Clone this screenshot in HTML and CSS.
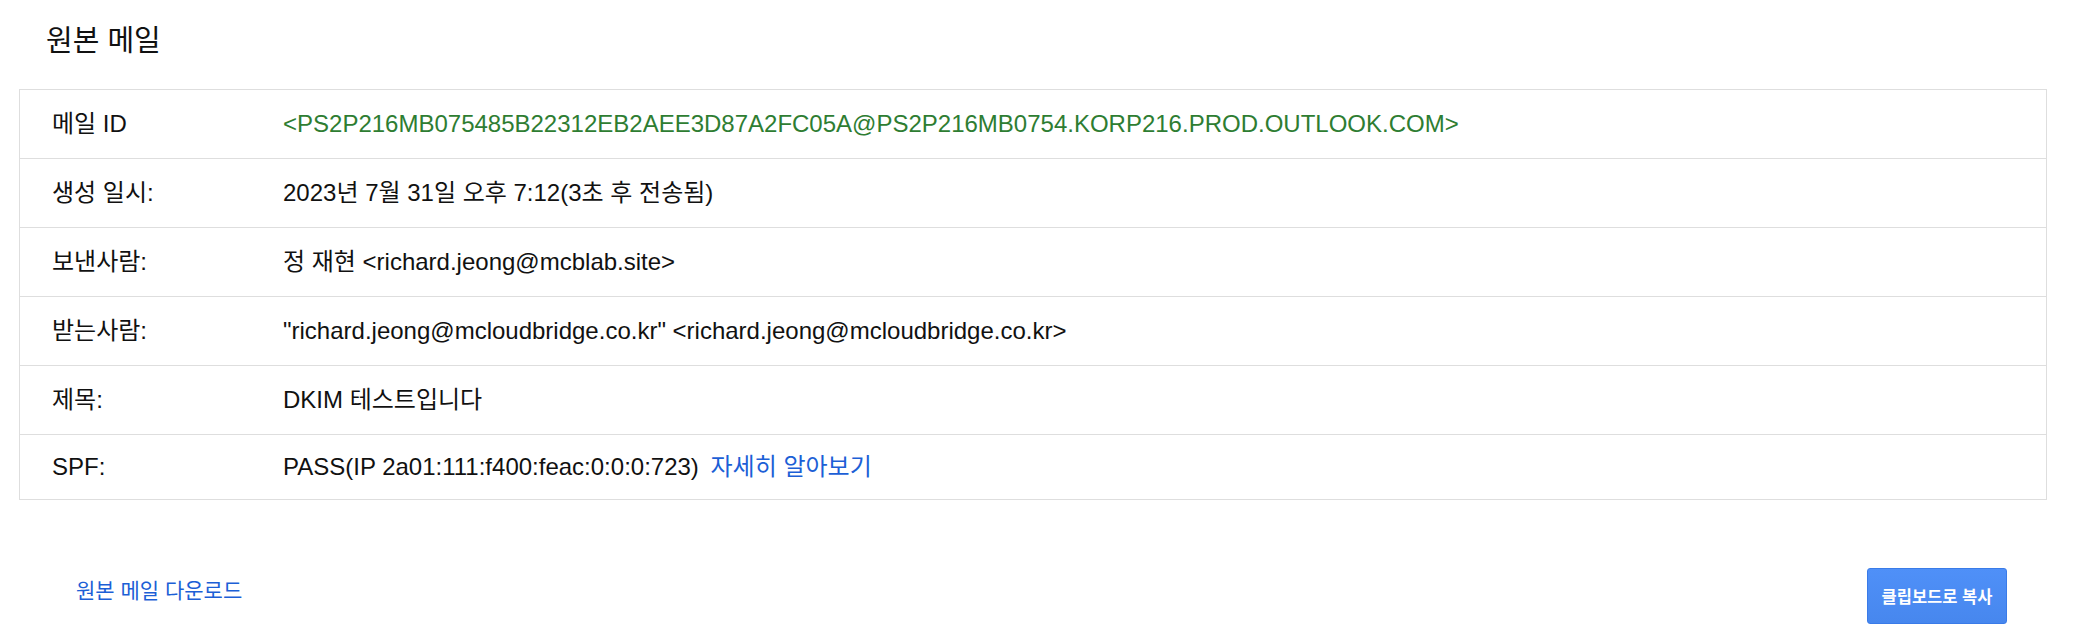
FILE: index.html
```html
<!DOCTYPE html>
<html lang="ko">
<head>
<meta charset="utf-8">
<title>원본 메일</title>
<link rel="stylesheet" href="styles.css">
</head>
<body>
<div class="page">
  <h1 class="title">원본 메일</h1>
  <div class="table">
    <div class="row">
      <div class="label">메일 ID</div>
      <div class="value green">&lt;PS2P216MB075485B22312EB2AEE3D87A2FC05A@PS2P216MB0754.KORP216.PROD.OUTLOOK.COM&gt;</div>
    </div>
    <div class="row">
      <div class="label">생성 일시:</div>
      <div class="value">2023년 7월 31일 오후 7:12(3초 후 전송됨)</div>
    </div>
    <div class="row">
      <div class="label">보낸사람:</div>
      <div class="value">정 재현 &lt;richard.jeong@mcblab.site&gt;</div>
    </div>
    <div class="row">
      <div class="label">받는사람:</div>
      <div class="value">"richard.jeong@mcloudbridge.co.kr" &lt;richard.jeong@mcloudbridge.co.kr&gt;</div>
    </div>
    <div class="row">
      <div class="label">제목:</div>
      <div class="value">DKIM 테스트입니다</div>
    </div>
    <div class="row last">
      <div class="label">SPF:</div>
      <div class="value">PASS(IP 2a01:111:f400:feac:0:0:0:723) <a class="link" href="#">자세히 알아보기</a></div>
    </div>
  </div>
  <div class="footer">
    <a class="download" href="#">원본 메일 다운로드</a>
    <button class="copy" type="button">클립보드로 복사</button>
  </div>
</div>
</body>
</html>
```
FILE: styles.css
```css
html, body {
  margin: 0;
  padding: 0;
  background: #ffffff;
}
body {
  font-family: "Liberation Sans", "Noto Sans CJK KR", sans-serif;
  color: #111111;
}
.page {
  padding: 0 52px 0 19px;
}
.title {
  margin: 0;
  height: 89px;
  box-sizing: border-box;
  padding: 21px 0 0 27px;
  font-size: 29px;
  font-weight: 400;
  line-height: 40px;
  color: #111111;
}
.table {
  border: 1px solid #dedede;
}
.row {
  display: grid;
  grid-template-columns: 231px 1fr;
  align-items: center;
  height: 68px;
  padding-left: 32px;
  border-bottom: 1px solid #dedede;
  font-size: 24px;
  line-height: 30px;
}
.row.last {
  height: 64px;
  border-bottom: none;
}
.value {
  white-space: nowrap;
}
.green {
  color: #2e7d32;
}
.link {
  color: #1c5fd6;
  text-decoration: none;
  margin-left: 5px;
}
.footer {
  display: flex;
  justify-content: space-between;
  align-items: flex-start;
  padding: 68px 40px 0 57px;
}
.download {
  margin-top: 9px;
  font-size: 21px;
  line-height: 28px;
  color: #1c5fd6;
  text-decoration: none;
}
.copy {
  width: 140px;
  height: 56px;
  padding: 0;
  border: 1px solid #3a7be8;
  border-radius: 3px;
  background: linear-gradient(#4f90f8, #4787ee);
  color: #ffffff;
  font-family: "Noto Sans CJK KR", sans-serif;
  font-size: 16.5px;
  font-weight: 700;
}
```
